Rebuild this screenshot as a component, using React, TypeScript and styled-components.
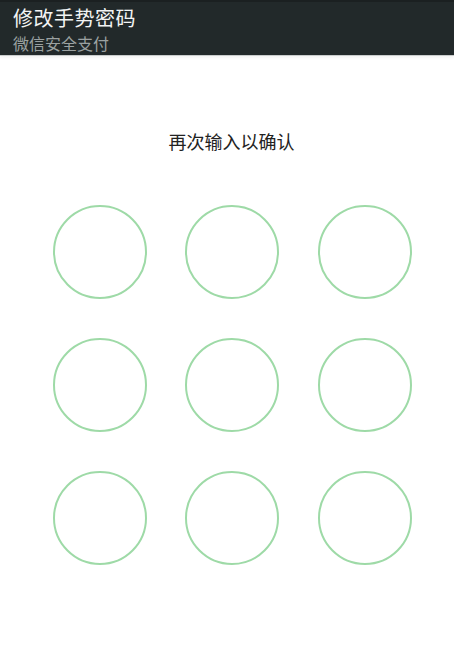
import styled, { createGlobalStyle } from "styled-components";

const GlobalStyle = createGlobalStyle`
  html, body {
    margin: 0;
    padding: 0;
    background: #ffffff;
  }
  body {
    font-family: "Noto Sans CJK SC", "Noto Sans", sans-serif;
  }
`;

const DOTS = Array.from({ length: 9 }, (_, i) => i);

export default function App() {
  return (
    <>
      <GlobalStyle />
      <Page>
        <Header>
          <Title>修改手势密码</Title>
          <Subtitle>微信安全支付</Subtitle>
        </Header>
        <Main>
          <Prompt>再次输入以确认</Prompt>
          <Grid>
            {DOTS.map((i) => (
              <Dot key={i} />
            ))}
          </Grid>
        </Main>
      </Page>
    </>
  );
}

const Page = styled.div`
  width: 454px;
  height: 658px;
  display: flex;
  flex-direction: column;
  overflow: hidden;
`;

const Header = styled.header`
  height: 56px;
  box-sizing: border-box;
  padding: 5px 13px 0;
  background: #22292a;
  border-top: 2px solid #1b2021;
  border-bottom: 1px solid #c9cccc;
  box-shadow: 0 2px 3px rgba(0, 0, 0, 0.05);
  display: flex;
  flex-direction: column;
`;

const Title = styled.div`
  color: #f2f4f4;
  font-size: 20px;
  line-height: 22px;
  letter-spacing: 0.5px;
`;

const Subtitle = styled.div`
  color: #9ba1a1;
  font-size: 16px;
  line-height: 18px;
  margin-top: 5px;
`;

const Main = styled.main`
  flex: 1;
  display: flex;
  flex-direction: column;
  align-items: center;
  padding-top: 73px;
`;

const Prompt = styled.div`
  color: #222222;
  font-size: 18px;
  line-height: 24px;
  margin-left: 9px;
`;

const Grid = styled.div`
  margin-top: 52px;
  display: grid;
  grid-template-columns: repeat(3, 94px);
  column-gap: 38.5px;
  row-gap: 39px;
  margin-left: 10px;
`;

const Dot = styled.div`
  width: 94px;
  height: 94px;
  box-sizing: border-box;
  border: 2px solid #9edaa7;
  border-radius: 50%;
`;
